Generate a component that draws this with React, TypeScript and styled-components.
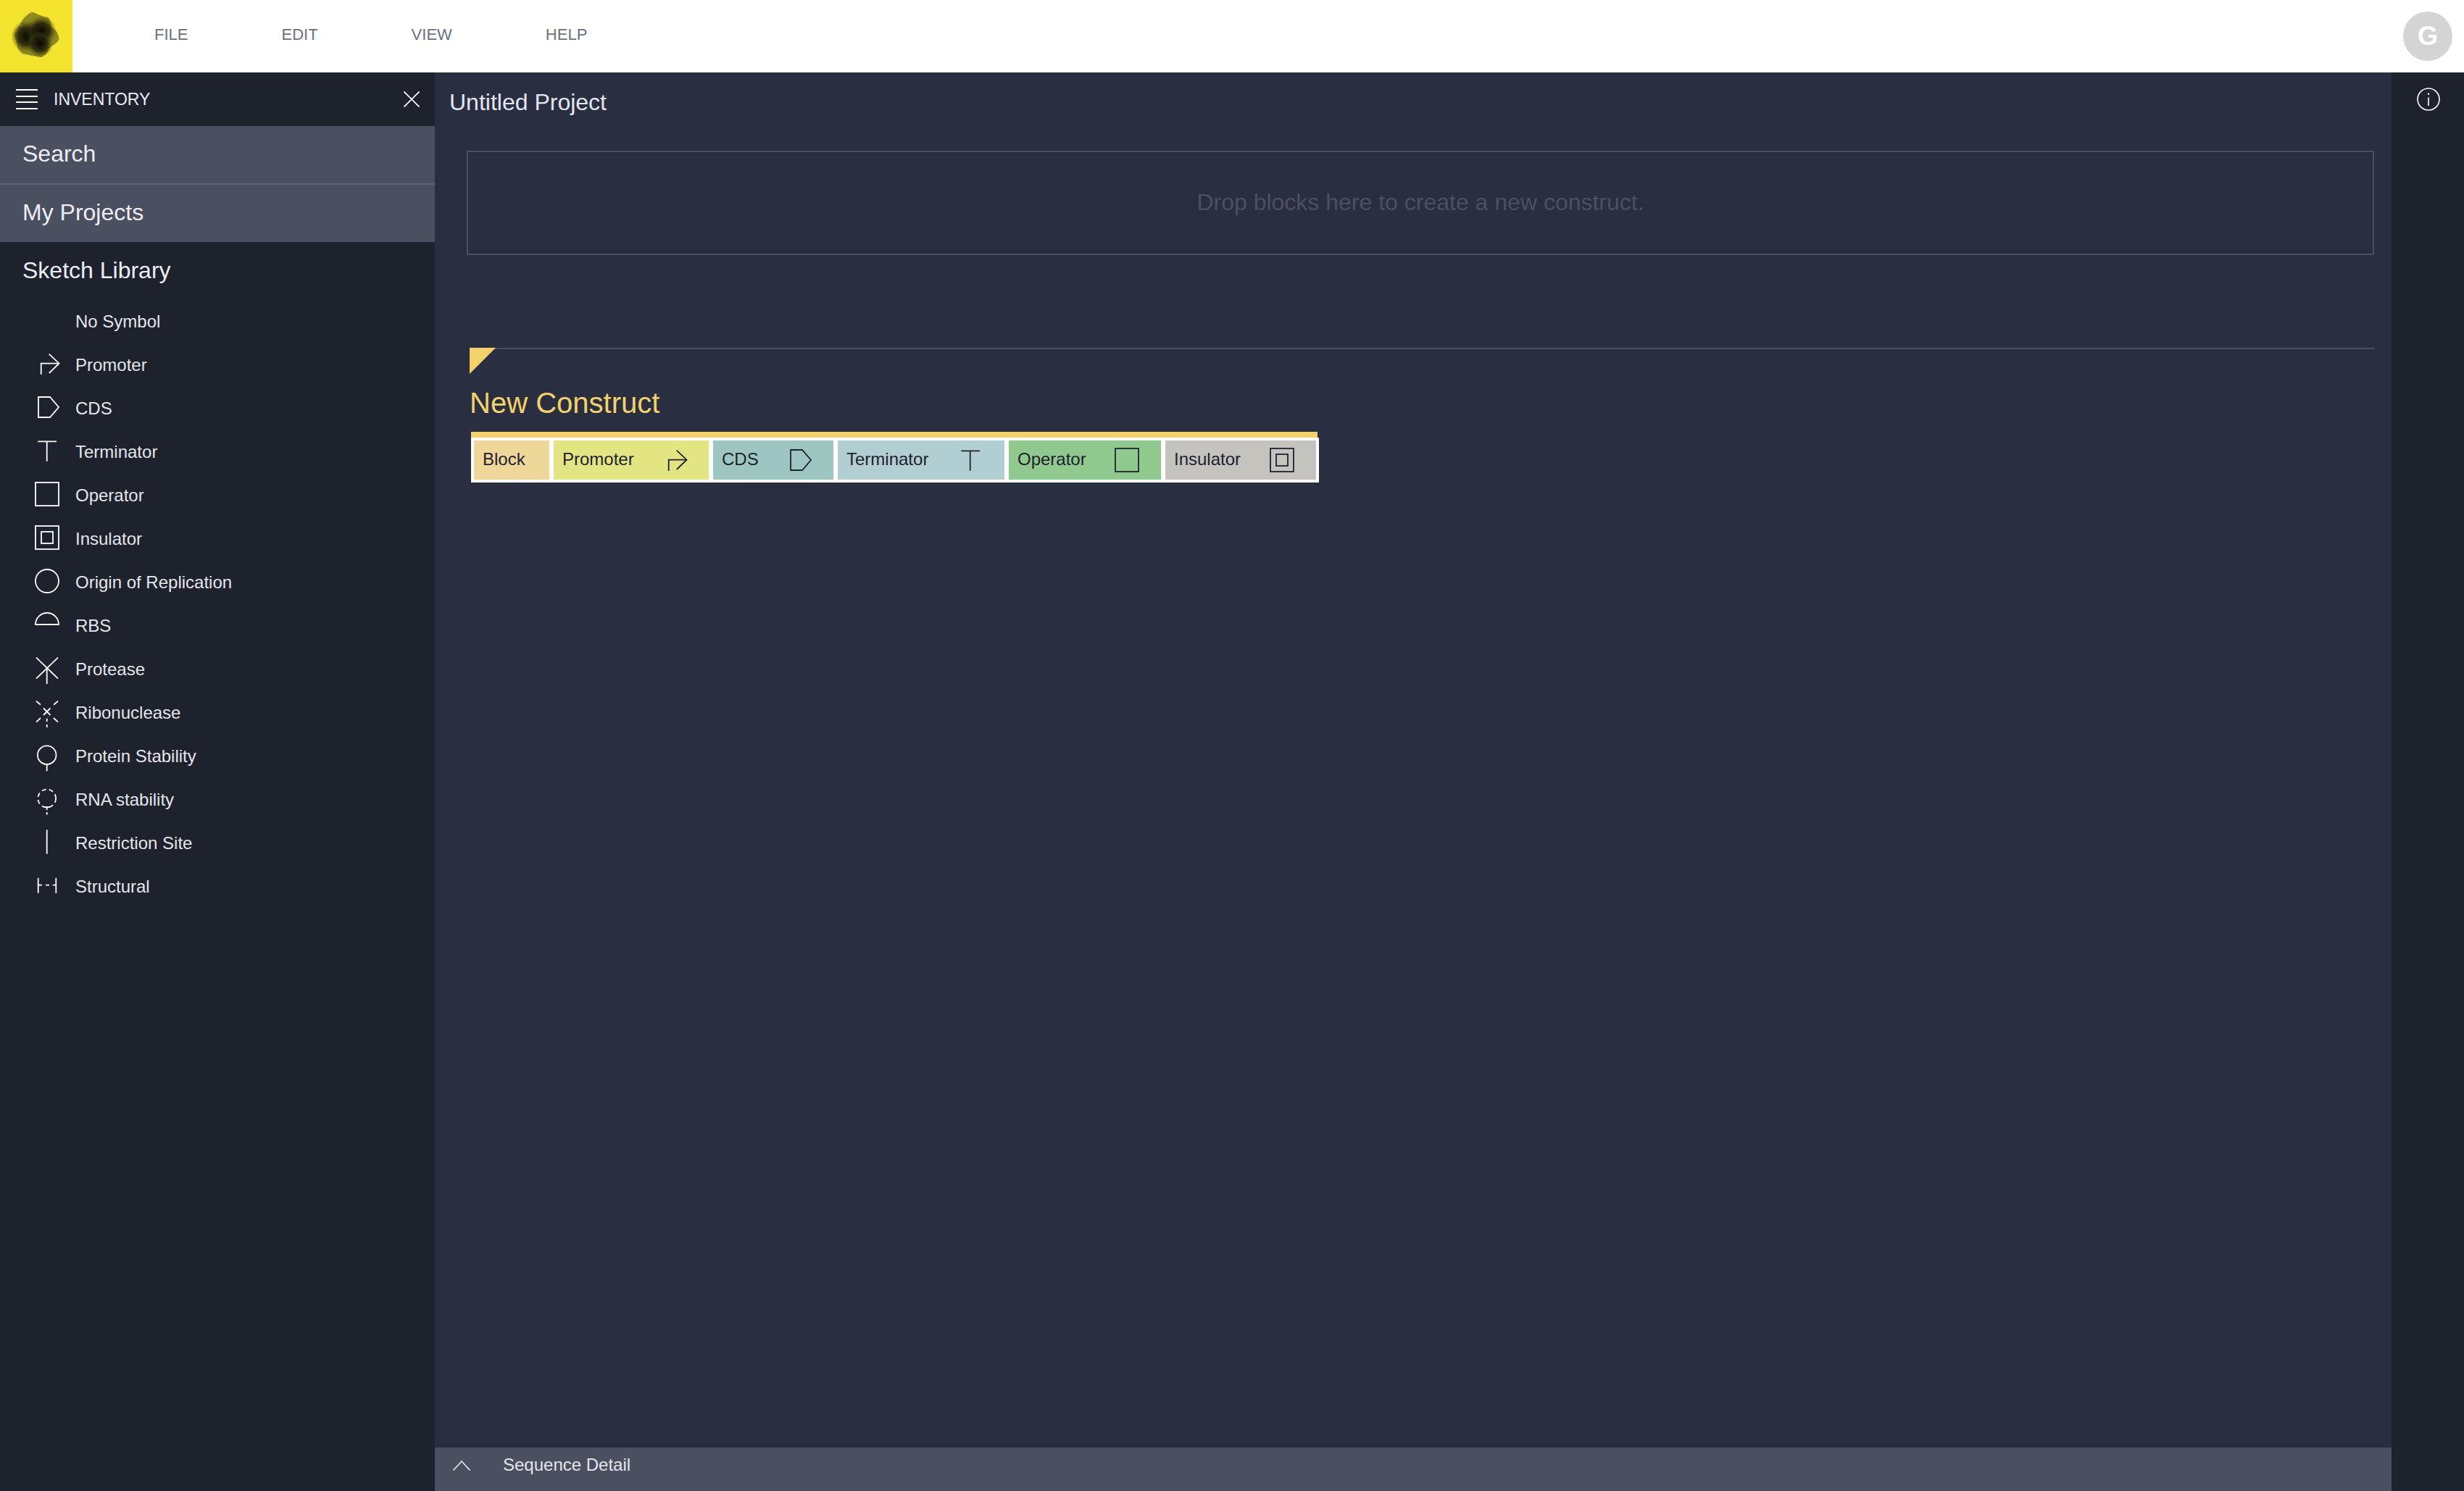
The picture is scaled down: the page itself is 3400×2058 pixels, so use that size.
import React from 'react';
import styled, {createGlobalStyle} from "styled-components";

const GlobalStyle = createGlobalStyle`
    html, body {
        margin: 0;
        padding: 0;
        background-color: #1e222d;
    }
    * {
        box-sizing: border-box;
    }
    body {
        font-family: "Liberation Sans", Arial, sans-serif;
    }
`

type GlyphName = "none" | "promoter" | "cds" | "terminator" | "operator" | "insulator" | "origin" | "rbs"
    | "protease" | "ribonuclease" | "proteinStability" | "rnaStability" | "restriction" | "structural";

const Glyph = ({name}: { name: GlyphName }) => {
    switch (name) {
        case "promoter":
            return <>
                <path d="M8.7 32V16.7H33.5"/>
                <path d="M19.7 3.7L33.5 16.7L19.7 30"/>
            </>
        case "cds":
            return <path d="M5 3H21L33 17L21 31H5Z"/>
        case "terminator":
            return <path d="M4.3 4.3H30M16.7 4.3V31.7"/>
        case "operator":
            return <rect x="1" y="1" width="32" height="32"/>
        case "insulator":
            return <>
                <rect x="1" y="1" width="32" height="32"/>
                <rect x="9" y="9" width="16" height="16"/>
            </>
        case "origin":
            return <circle cx="17" cy="17" r="16"/>
        case "rbs":
            return <path d="M1 17A16 16 0 0 1 33 17Z"/>
        case "protease":
            return <path d="M2 2.7L32 31.7M32 2.7L2 31.7M16.7 17.7V39"/>
        case "ribonuclease":
            return <path
                d="M2 2.7L8 7.7M32 2.7L26 7.7M2 31.7L8 26M32 31.7L26 26M12 12.5L21.5 22M21.5 12.5L12 22M16.7 26.7V31M16.7 35V39"/>
        case "proteinStability":
            return <>
                <circle cx="16.7" cy="17.2" r="12.8"/>
                <path d="M16.7 30V39.3"/>
            </>
        case "rnaStability":
            return <>
                <circle cx="16.7" cy="17" r="12.4" strokeDasharray="6 4.2"/>
                <path d="M12 29H21M16.7 29.5V33M16.7 36V39.5"/>
            </>
        case "restriction":
            return <path d="M16.7 0.3V33.7"/>
        case "structural":
            return <path d="M4.7 6.7V27.7M29.3 6.7V27.7M5 16.7H10M15 16.7H20M24.7 16.7H29.3"/>
        default:
            return null
    }
}

const SymbolIcon = ({name, color}: { name: GlyphName, color: string }) => (
    <SymbolSvg viewBox="0 0 34 34" fill="none" stroke={color} strokeWidth="1.8">
        <Glyph name={name}/>
    </SymbolSvg>
)

const Logo = () => (
    <svg width="100" height="100" viewBox="0 0 100 100">
        <defs>
            <filter id="fuzz" x="-20%" y="-20%" width="140%" height="140%">
                <feTurbulence type="fractalNoise" baseFrequency="0.9" numOctaves="2" seed="4" result="noise"/>
                <feDisplacementMap in="SourceGraphic" in2="noise" scale="3"/>
            </filter>
            <radialGradient id="lobe">
                <stop offset="0%" stopColor="#0a0a03"/>
                <stop offset="55%" stopColor="#1f1d08" stopOpacity="0.85"/>
                <stop offset="100%" stopColor="#4a470f" stopOpacity="0"/>
            </radialGradient>
        </defs>
        <g filter="url(#fuzz)">
            <path
                fill="#8f8a1d"
                d="M44 17C51 18 57 23 63 23C69 24 70 29 71 37C77 41 82 47 81 55C79 60 73 62 69 66C66 72 61 79 55 79C47 77 39 76 31 74C24 69 23 62 23 57C20 52 19 47 22 43C26 37 29 30 33 25C37 21 40 18 44 17Z"/>
            <circle cx="37" cy="50" r="22" fill="url(#lobe)"/>
            <circle cx="57" cy="43" r="21" fill="url(#lobe)"/>
            <circle cx="55" cy="61" r="18" fill="url(#lobe)"/>
        </g>
    </svg>
)

const menuItems = ["FILE", "EDIT", "VIEW", "HELP"];

const symbols: { name: GlyphName, label: string }[] = [
    {name: "none", label: "No Symbol"},
    {name: "promoter", label: "Promoter"},
    {name: "cds", label: "CDS"},
    {name: "terminator", label: "Terminator"},
    {name: "operator", label: "Operator"},
    {name: "insulator", label: "Insulator"},
    {name: "origin", label: "Origin of Replication"},
    {name: "rbs", label: "RBS"},
    {name: "protease", label: "Protease"},
    {name: "ribonuclease", label: "Ribonuclease"},
    {name: "proteinStability", label: "Protein Stability"},
    {name: "rnaStability", label: "RNA stability"},
    {name: "restriction", label: "Restriction Site"},
    {name: "structural", label: "Structural"},
];

const blocks: { name: GlyphName, label: string, width: number, color: string }[] = [
    {name: "none", label: "Block", width: 104, color: "#efd699"},
    {name: "promoter", label: "Promoter", width: 214, color: "#e2e581"},
    {name: "cds", label: "CDS", width: 166, color: "#9dc6c1"},
    {name: "terminator", label: "Terminator", width: 230, color: "#b1cfd2"},
    {name: "operator", label: "Operator", width: 210, color: "#8fc98d"},
    {name: "insulator", label: "Insulator", width: 208, color: "#c4c3be"},
];

export default function App() {
    return (
        <Page>
            <GlobalStyle/>
            <Header>
                <LogoBox><Logo/></LogoBox>
                <Menu>
                    {menuItems.map(item => <MenuItem key={item}>{item}</MenuItem>)}
                </Menu>
                <Avatar>G</Avatar>
            </Header>
            <Body>
                <Sidebar>
                    <InventoryBar>
                        <Hamburger><i/><i/><i/><i/></Hamburger>
                        <InventoryTitle>INVENTORY</InventoryTitle>
                        <CloseIcon viewBox="0 0 22 22" fill="none" stroke="#ffffff" strokeWidth="1.6">
                            <path d="M0.5 0.5L21.5 21.5M21.5 0.5L0.5 21.5"/>
                        </CloseIcon>
                    </InventoryBar>
                    <Section $active>Search</Section>
                    <SectionDivider/>
                    <Section $active>My Projects</Section>
                    <Section>Sketch Library</Section>
                    <SymbolList>
                        {symbols.map(symbol => (
                            <SymbolRow key={symbol.label}>
                                <SymbolIcon name={symbol.name} color="#ffffff"/>
                                <SymbolLabel>{symbol.label}</SymbolLabel>
                            </SymbolRow>
                        ))}
                    </SymbolList>
                </Sidebar>
                <Main>
                    <ProjectTitle>Untitled Project</ProjectTitle>
                    <DropZone>Drop blocks here to create a new construct.</DropZone>
                    <Construct>
                        <ConstructTitle>New Construct</ConstructTitle>
                        <BlockGroup>
                            <BlockRow>
                                {blocks.map(block => (
                                    <BlockItem key={block.label} $width={block.width} $color={block.color}>
                                        <span>{block.label}</span>
                                        {block.name !== "none" && <SymbolIcon name={block.name} color="#1e222d"/>}
                                    </BlockItem>
                                ))}
                            </BlockRow>
                        </BlockGroup>
                    </Construct>
                    <SequenceBar>
                        <ChevronIcon viewBox="0 0 24 14" fill="none" stroke="#e4e6ea" strokeWidth="1.6">
                            <path d="M0.5 13.5L12 1L23.5 13.5"/>
                        </ChevronIcon>
                        <SequenceLabel>Sequence Detail</SequenceLabel>
                    </SequenceBar>
                </Main>
                <InfoRail>
                    <InfoIcon viewBox="0 0 32 32" fill="none" stroke="#ffffff" strokeWidth="1.6">
                        <circle cx="16" cy="16" r="15"/>
                        <path d="M16 13.5V25"/>
                        <path d="M16 7.5V10" strokeWidth="2"/>
                    </InfoIcon>
                </InfoRail>
            </Body>
        </Page>
    );
}

const Page = styled.div`
    display: flex;
    flex-direction: column;
    width: 3400px;
    height: 2058px;
    overflow: hidden;
`

const Header = styled.header`
    display: flex;
    align-items: center;
    flex: 0 0 100px;
    background-color: #ffffff;
    padding-right: 16px;
`

const LogoBox = styled.div`
    width: 100px;
    height: 100px;
    background-color: #f3e52d;
`

const Menu = styled.nav`
    display: flex;
    gap: 129px;
    margin: -4px auto 0 113px;
`

const MenuItem = styled.span`
    font-size: 22px;
    color: #6b7081;
`

const Avatar = styled.div`
    display: flex;
    align-items: center;
    justify-content: center;
    width: 68px;
    height: 68px;
    border-radius: 50%;
    background-color: #d4d4d4;
    color: #ffffff;
    font-size: 36px;
    font-weight: 700;
`

const Body = styled.div`
    display: flex;
    flex: 1;
    min-height: 0;
`

const Sidebar = styled.aside`
    display: flex;
    flex-direction: column;
    flex: 0 0 600px;
    background-color: #1e222d;
`

const InventoryBar = styled.div`
    display: flex;
    align-items: center;
    height: 74px;
    padding: 0 21px 0 22px;
`

const Hamburger = styled.div`
    display: flex;
    flex-direction: column;
    gap: 6.5px;
    width: 30px;

    i {
        display: block;
        height: 2px;
        background-color: #ffffff;
    }
`

const InventoryTitle = styled.span`
    margin-left: 22px;
    margin-right: auto;
    font-size: 23px;
    color: #e9ebf1;
`

const CloseIcon = styled.svg`
    width: 22px;
    height: 22px;
`

const Section = styled.div<{ $active?: boolean }>`
    display: flex;
    align-items: center;
    height: ${props => props.$active ? "79px" : "80px"};
    padding: 0 0 2px 31px;
    background-color: ${props => props.$active ? "#4b5060" : "transparent"};
    color: #eceef3;
    font-size: 32px;
`

const SectionDivider = styled.div`
    height: 2px;
    background-color: #62667a;
`

const SymbolList = styled.ul`
    display: flex;
    flex-direction: column;
    margin: 0;
    padding: 0 0 0 48px;
    list-style: none;
`

const SymbolRow = styled.li`
    display: flex;
    align-items: center;
    height: 60px;
`

const SymbolSvg = styled.svg`
    flex: 0 0 34px;
    width: 34px;
    height: 34px;
    margin-top: -4px;
    overflow: visible;
`

const SymbolLabel = styled.span`
    margin-left: 22px;
    color: #e4e6ea;
    font-size: 24px;
`

const Main = styled.main`
    display: flex;
    flex-direction: column;
    flex: 1;
    min-width: 0;
    background-color: #2a2e41;
`

const ProjectTitle = styled.h1`
    margin: 0;
    padding: 21px 0 0 20px;
    height: 84px;
    color: #e4e6ef;
    font-size: 32px;
    font-weight: 400;
    line-height: 40px;
`

const DropZone = styled.div`
    display: flex;
    align-items: center;
    justify-content: center;
    height: 144px;
    margin: 24px 24px 0 44px;
    padding-bottom: 2px;
    border: 2px solid #4b5060;
    color: #4b5060;
    font-size: 32px;
`

const Construct = styled.section`
    position: relative;
    margin: 128px 24px 0 48px;
    border-top: 2px solid #4b5060;

    &::before {
        content: "";
        position: absolute;
        left: 0;
        top: -2px;
        width: 36px;
        height: 36px;
        background-color: #f3d26a;
        clip-path: polygon(0 0, 100% 0, 0 100%);
    }
`

const ConstructTitle = styled.h2`
    margin: 0;
    padding-top: 50px;
    color: #f3d26a;
    font-size: 40px;
    font-weight: 400;
    line-height: 48px;
`

const BlockGroup = styled.div`
    display: inline-block;
    margin: 16px 0 0 2px;
    border-top: 8px solid #f3d26a;
`

const BlockRow = styled.div`
    display: flex;
    gap: 6px;
    margin-right: -2px;
    padding: 4px;
    background-color: #ffffff;
`

const BlockItem = styled.div<{ $width: number, $color: string }>`
    display: flex;
    align-items: center;
    justify-content: space-between;
    width: ${props => props.$width}px;
    height: 54px;
    padding: 0 30px 0 12px;
    background-color: ${props => props.$color};
    color: #1e222d;
    font-size: 24px;

    svg {
        margin-top: 0;
    }

    span {
        margin-top: -3px;
    }
`

const SequenceBar = styled.div`
    display: flex;
    align-items: center;
    height: 60px;
    margin-top: auto;
    padding: 0 0 10px 25px;
    background-color: #4b5060;
`

const ChevronIcon = styled.svg`
    width: 24px;
    height: 14px;
`

const SequenceLabel = styled.span`
    margin-left: 45px;
    margin-top: -2px;
    color: #e4e6ea;
    font-size: 24px;
`

const InfoRail = styled.aside`
    display: flex;
    justify-content: center;
    flex: 0 0 100px;
    padding: 21px 0 0 2px;
    background-color: #1e222d;
`

const InfoIcon = styled.svg`
    width: 32px;
    height: 32px;
`
